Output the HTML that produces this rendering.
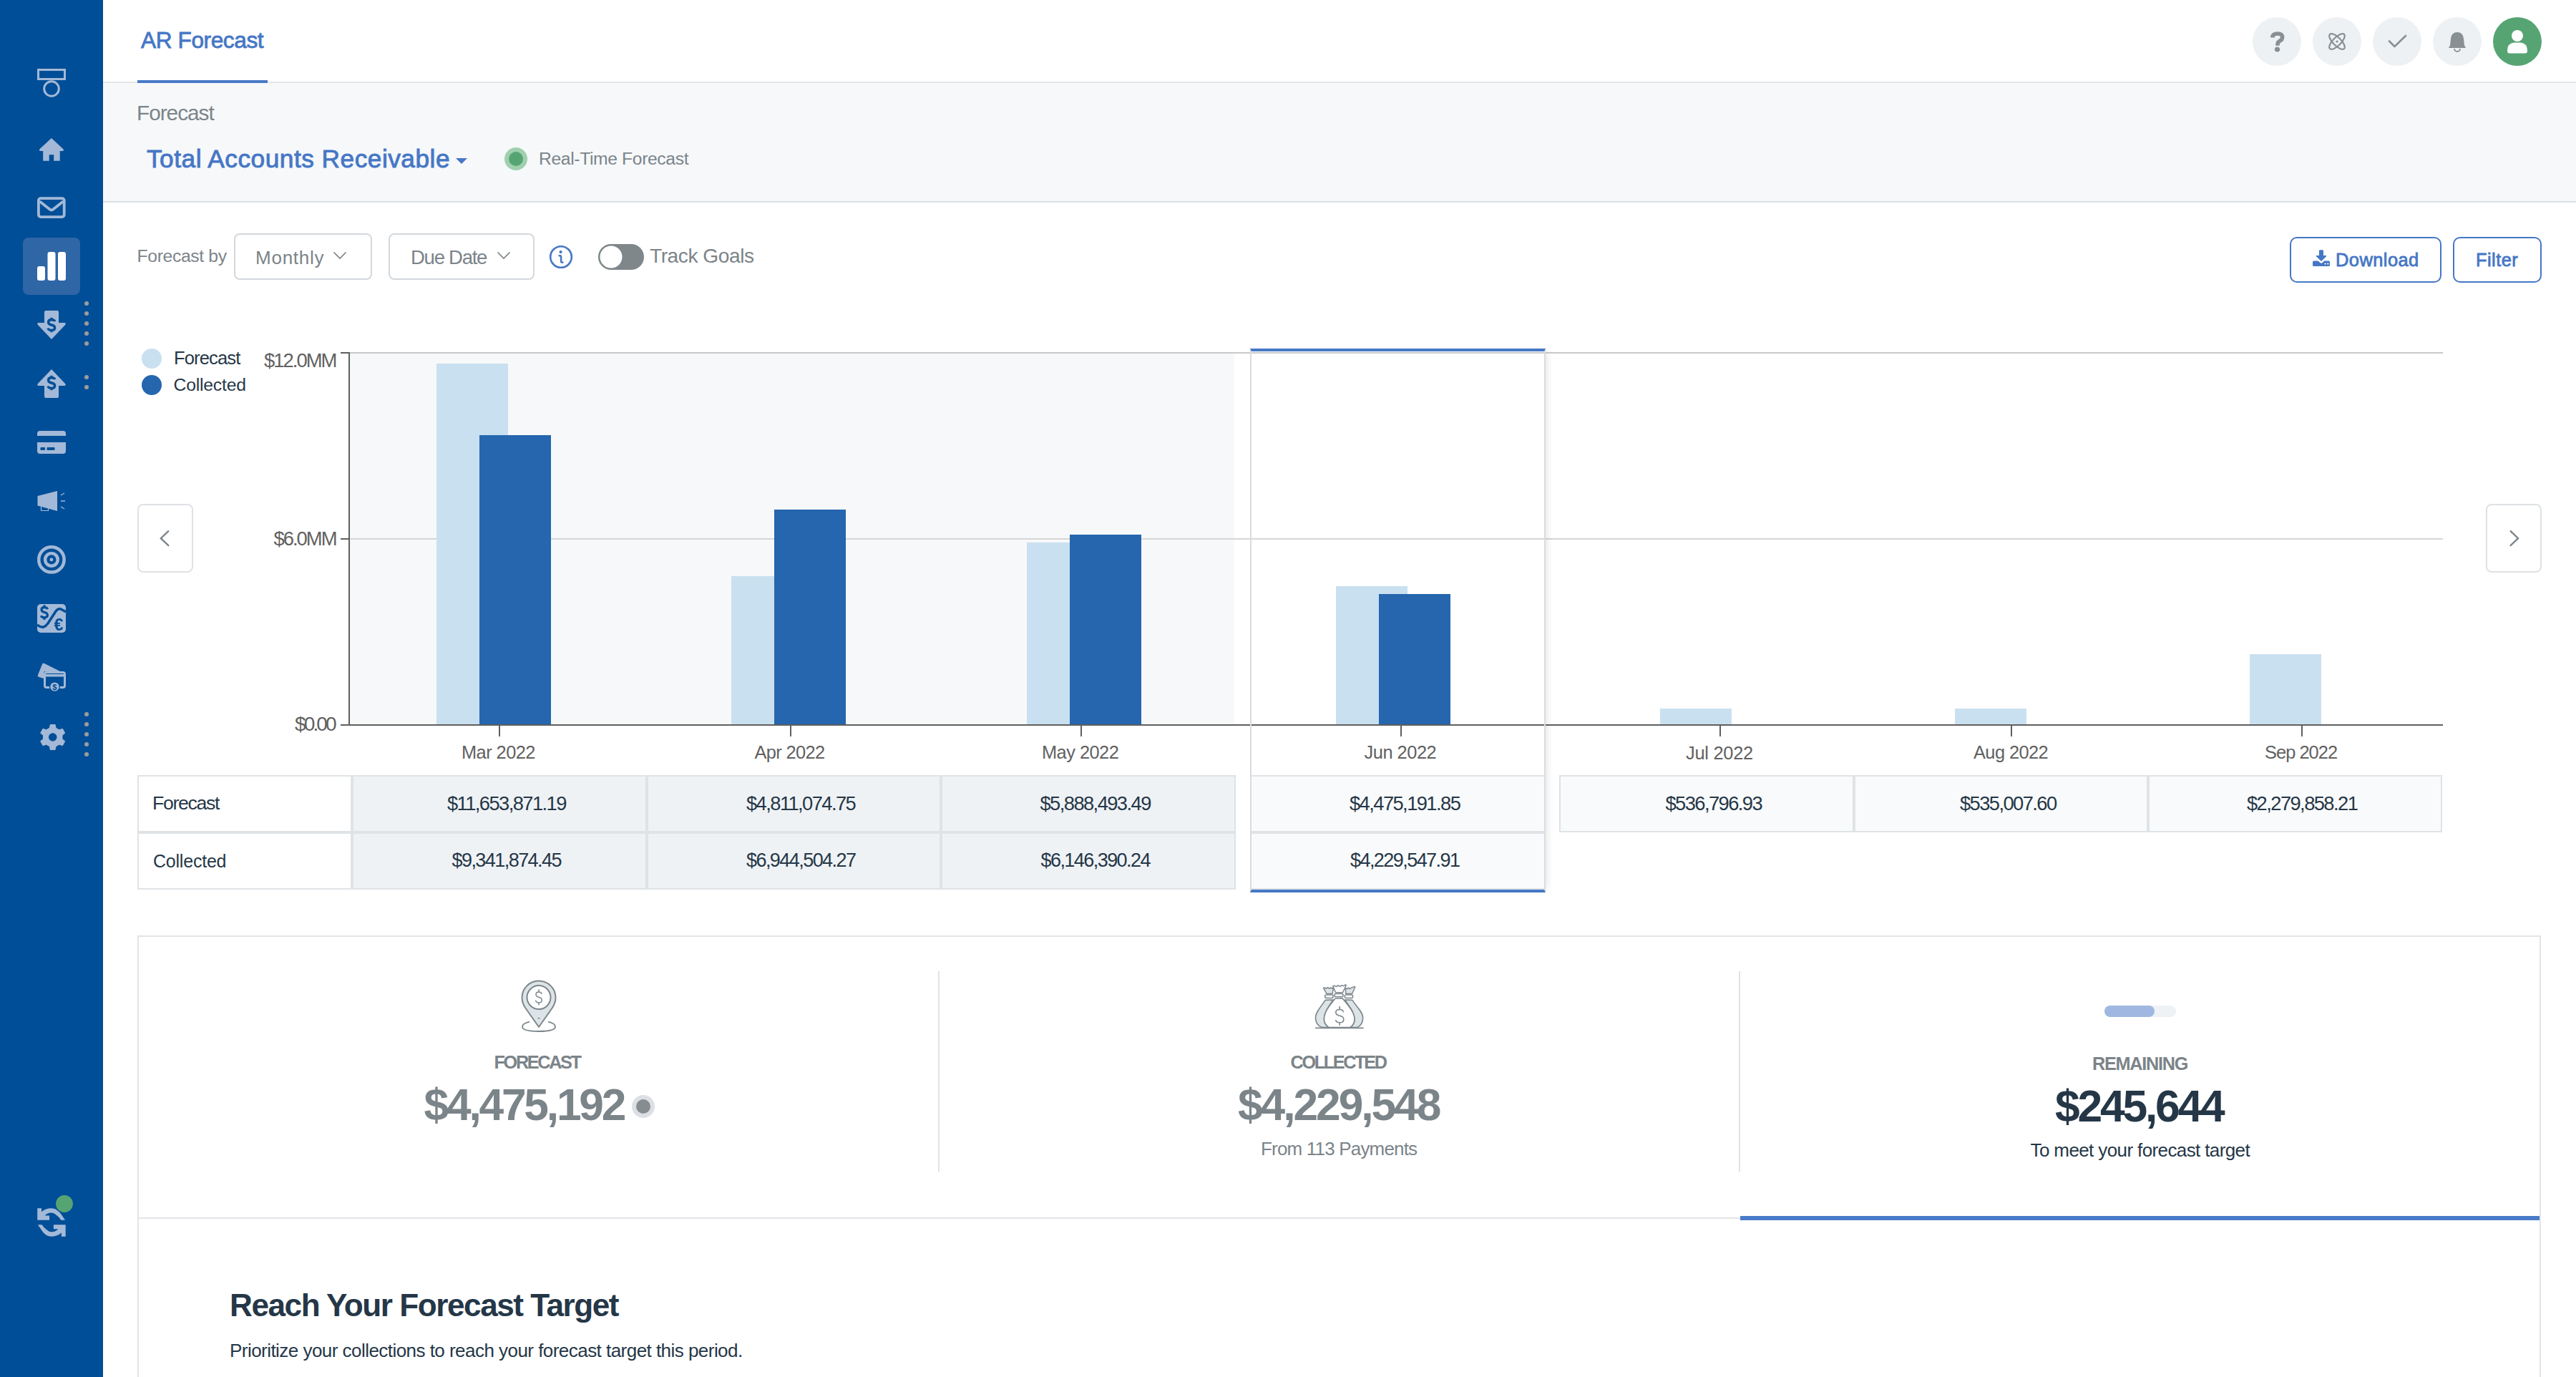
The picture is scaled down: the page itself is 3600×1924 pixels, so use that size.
<!DOCTYPE html><html><head><meta charset="utf-8"><title>AR Forecast</title><style>
html,body{margin:0;padding:0;width:3600px;height:1924px;overflow:hidden;background:#fff}
.a{position:absolute;box-sizing:border-box}
.t{position:absolute;white-space:nowrap;font-family:'Liberation Sans',sans-serif;margin:0}
svg{position:absolute;left:0;top:0;overflow:visible}
</style></head><body>
<div class="a" style="left:0px;top:0px;width:144px;height:1924px;background:#004e97"></div>
<div class="a" style="left:32px;top:332px;width:80px;height:80px;background:#2f66a6;border-radius:8px"></div>
<svg width="144" height="1924"><rect x="53.5" y="97.5" width="37" height="13" fill="none" stroke="#a3b9d7" stroke-width="3"/><circle cx="72" cy="124" r="10.3" fill="none" stroke="#a3b9d7" stroke-width="3"/><path d="M71.9 193 L88.6 208.6 Q89.6 210.6 88 210.9 H83.7 V224.7 H75.2 V216.2 H68.7 V224.7 H60.2 V210.9 H55.8 Q54.2 210.6 55.2 208.6 Z" fill="#a3b9d7"/><rect x="53.9" y="277.1" width="35.8" height="26" rx="3" fill="none" stroke="#a3b9d7" stroke-width="3.8"/><path d="M55.6 281.6 L69.5 292.6 Q71.9 294.4 74.3 292.6 L88.2 281.6" fill="none" stroke="#a3b9d7" stroke-width="3.8"/><rect x="52" y="372" width="11" height="20" rx="3" fill="#fff"/><rect x="66.5" y="352" width="11" height="40" rx="3" fill="#fff"/><rect x="81" y="352" width="11" height="40" rx="3" fill="#fff"/><path d="M64 434 H80 Q82 434 82 436 V451 H90 Q93 451 91 454 L73 473 Q72 474.5 71 473 L53 454 Q51 451 54 451 H62 V436 Q62 434 64 434 Z" fill="#a3b9d7"/><path d="M76.6 449.2 Q76 446.8 72 446.8 Q67.6 446.8 67.6 450.2 Q67.6 453 72 454 Q76.6 455 76.6 458.2 Q76.6 461.4 72 461.4 Q67.8 461.4 67 458.6" transform="translate(0 0)" fill="none" stroke="#004e97" stroke-width="3.4"/><rect x="70.4" y="443.8" width="3.2" height="4" fill="#004e97"/><rect x="70.4" y="460.5" width="3.2" height="3.7" fill="#004e97"/><path d="M64 556 H80 Q82 556 82 554 V539 H90 Q93 539 91 536 L73 517 Q72 515.5 71 517 L53 536 Q51 539 54 539 H62 V554 Q62 556 64 556 Z" fill="#a3b9d7"/><path d="M76.6 449.2 Q76 446.8 72 446.8 Q67.6 446.8 67.6 450.2 Q67.6 453 72 454 Q76.6 455 76.6 458.2 Q76.6 461.4 72 461.4 Q67.8 461.4 67 458.6" transform="translate(0 81)" fill="none" stroke="#004e97" stroke-width="3.4"/><rect x="70.4" y="524.8" width="3.2" height="4" fill="#004e97"/><rect x="70.4" y="541.5" width="3.2" height="3.7" fill="#004e97"/><circle cx="121" cy="424" r="3" fill="#9c9c9c"/><circle cx="121" cy="438" r="3" fill="#9c9c9c"/><circle cx="121" cy="452" r="3" fill="#9c9c9c"/><circle cx="121" cy="466" r="3" fill="#9c9c9c"/><circle cx="121" cy="480" r="3" fill="#9c9c9c"/><circle cx="121" cy="527" r="3" fill="#9c9c9c"/><circle cx="121" cy="541" r="3" fill="#9c9c9c"/><circle cx="121" cy="998" r="3" fill="#9c9c9c"/><circle cx="121" cy="1012" r="3" fill="#9c9c9c"/><circle cx="121" cy="1026" r="3" fill="#9c9c9c"/><circle cx="121" cy="1040" r="3" fill="#9c9c9c"/><circle cx="121" cy="1054" r="3" fill="#9c9c9c"/><path d="M52 609 V606 Q52 602 56 602 H88 Q92 602 92 606 V609 Z" fill="#a3b9d7"/><path d="M52 618 H92 V630 Q92 634 88 634 H56 Q52 634 52 630 Z" fill="#a3b9d7"/><rect x="56.5" y="625" width="6.5" height="4" rx="1" fill="#004e97"/><rect x="65.5" y="625" width="11" height="4" rx="1" fill="#004e97"/><path d="M52.5 693 L80 686 L80 714 L52.5 706.5 Z" fill="#a3b9d7"/><path d="M57.5 708 V713.5 H67.5 V710" fill="none" stroke="#a3b9d7" stroke-width="1.2"/><path d="M85 692 L90 689 M85 700 H91 M85 708 L90 711" stroke="#a3b9d7" stroke-width="1.3"/><circle cx="71.9" cy="781.9" r="17.7" fill="none" stroke="#a3b9d7" stroke-width="4.5"/><circle cx="71.9" cy="781.9" r="8.8" fill="none" stroke="#a3b9d7" stroke-width="4.4"/><circle cx="71.9" cy="781.9" r="2.4" fill="#a3b9d7"/><rect x="52" y="844" width="40" height="40" rx="5" fill="#a3b9d7"/><path d="M52 873 Q57 877 61 876 Q64 875 67 871 L78 854 Q81 850 85 851 Q89 853 92 855" fill="none" stroke="#004e97" stroke-width="3.5"/><path d="M66.4 851.2 Q65.6 848.6 62 848.6 Q58 848.6 58 851.8 Q58 854.5 62 855.5 Q66.4 856.5 66.4 859.6 Q66.4 862.8 62 862.8 Q58.2 862.8 57.4 860.2" fill="none" stroke="#004e97" stroke-width="3.2"/><rect x="60.5" y="845.4" width="3" height="3.6" fill="#004e97"/><rect x="60.5" y="862.4" width="3" height="3.6" fill="#004e97"/><text x="82" y="881" text-anchor="middle" font-family="Liberation Sans" font-weight="700" font-size="23" fill="#004e97">€</text><path d="M53 943 Q52 945 54.5 946 L61 948 V940 Q61 938 63 938 H84 L62 927 Q60 926 59 928 Z" fill="#a3b9d7"/><rect x="62.5" y="939.5" width="28" height="21" rx="2.5" fill="none" stroke="#a3b9d7" stroke-width="3"/><rect x="62" y="942" width="29" height="3.5" fill="#a3b9d7"/><circle cx="76.4" cy="959.6" r="7.5" fill="#004e97"/><circle cx="76.4" cy="959.6" r="6.2" fill="#a3b9d7"/><text x="76.4" y="963.6" text-anchor="middle" font-family="Liberation Sans" font-weight="700" font-size="11" fill="#004e97">$</text><path d="M69.62 1017.45 L70.58 1012.68 L76.82 1012.68 L77.78 1017.45 L82.53 1020.19 L87.14 1018.64 L90.26 1024.04 L86.61 1027.26 L86.61 1032.74 L90.26 1035.96 L87.14 1041.36 L82.53 1039.81 L77.78 1042.55 L76.82 1047.32 L70.58 1047.32 L69.62 1042.55 L64.87 1039.81 L60.26 1041.36 L57.14 1035.96 L60.79 1032.74 L60.79 1027.26 L57.14 1024.04 L60.26 1018.64 L64.87 1020.19 Z" fill="#a3b9d7" stroke="#a3b9d7" stroke-width="1.6" stroke-linejoin="round"/><circle cx="73.7" cy="1030" r="5.8" fill="#004e97"/><path id="rf" d="M52.2 1688.2 L58 1688.2 L58 1693.3 Q64 1688.2 71.5 1688.2 Q80 1688.2 85 1696 Q87.5 1699.6 91 1704.7 L85.3 1704.7 Q82.5 1700.4 79 1698 Q75.5 1694.6 71.5 1694.6 Q66 1694.6 62.7 1698.6 L69 1698.6 L69 1704.7 L52.2 1704.7 Z" fill="#a3b9d7"/><path d="M52.2 1688.2 L58 1688.2 L58 1693.3 Q64 1688.2 71.5 1688.2 Q80 1688.2 85 1696 Q87.5 1699.6 91 1704.7 L85.3 1704.7 Q82.5 1700.4 79 1698 Q75.5 1694.6 71.5 1694.6 Q66 1694.6 62.7 1698.6 L69 1698.6 L69 1704.7 L52.2 1704.7 Z" transform="rotate(180 71.95 1707.95)" fill="#a3b9d7"/><circle cx="90" cy="1682" r="13.6" fill="#004e97"/><circle cx="90" cy="1682" r="11.9" fill="#57a473"/></svg>
<div class="a" style="left:144px;top:114px;width:3456px;height:2px;background:#e5e5e6"></div>
<div class="a" style="left:192px;top:112px;width:182px;height:4px;background:#4a7bc7"></div>
<div class="a" style="left:144px;top:116px;width:3456px;height:165px;background:#f6f8fa"></div>
<div class="a" style="left:144px;top:281px;width:3456px;height:2px;background:#dcdfe3"></div>
<svg width="3600" height="1924" style="pointer-events:none"><circle cx="3182" cy="58" r="34" fill="#eef1f4"/><circle cx="3266" cy="58" r="34" fill="#eef1f4"/><circle cx="3350" cy="58" r="34" fill="#eef1f4"/><circle cx="3434" cy="58" r="34" fill="#eef1f4"/><circle cx="3518" cy="58" r="34" fill="#57a473"/><path d="M3175.6 52.5 Q3176 47 3183 47 Q3189.6 47 3189.6 52 Q3189.6 55.5 3186 57.3 Q3183 59 3183 62 V63.8" fill="none" stroke="#899094" stroke-width="5.6" stroke-linecap="butt"/><circle cx="3182.5" cy="69" r="3.6" fill="#899094"/><ellipse cx="3266" cy="58" rx="14.2" ry="5.6" transform="rotate(45 3266 58)" fill="none" stroke="#899094" stroke-width="2.2"/><ellipse cx="3266" cy="58" rx="14.2" ry="5.6" transform="rotate(-45 3266 58)" fill="none" stroke="#899094" stroke-width="2.2"/><circle cx="3266" cy="58" r="1.6" fill="#899094"/><path d="M3339 57.5 L3346.5 65 L3362 50" fill="none" stroke="#899094" stroke-width="2.6" stroke-linejoin="round" stroke-linecap="round"/><path d="M3434 45 Q3442 45 3443 54 L3444 63 Q3444.5 65 3446 66.5 V67 H3422 V66.5 Q3423.5 65 3424 63 L3425 54 Q3426 45 3434 45 Z" fill="#899094"/><path d="M3430 68 A4 4 0 0 0 3438 68" fill="none" stroke="#899094" stroke-width="1.8"/><circle cx="3518" cy="50" r="8" fill="#fff"/><path d="M3504 71 Q3504 60 3514 59.5 H3522 Q3532 60 3532 71 Q3532 74.5 3529 74.5 H3507 Q3504 74.5 3504 71 Z" fill="#fff"/></svg>
<div class="a" style="left:705px;top:206px;width:32px;height:32px;background:#a0d0ae;border-radius:50%"></div>
<div class="a" style="left:711px;top:212px;width:20px;height:20px;background:#56a473;border-radius:50%"></div>
<div class="a" style="left:327px;top:326px;width:193px;height:65px;border:2px solid #d4d8dc;border-radius:8px;background:#fff"></div>
<div class="a" style="left:543px;top:326px;width:204px;height:65px;border:2px solid #d4d8dc;border-radius:8px;background:#fff"></div>
<div class="a" style="left:3200px;top:331px;width:212px;height:64px;border:2px solid #4677c5;border-radius:10px;background:#fff"></div>
<div class="a" style="left:3428px;top:331px;width:124px;height:64px;border:2px solid #4677c5;border-radius:10px;background:#fff"></div>
<svg width="3600" height="1924"><path d="M637 221 H653 L645 229 Z" fill="#4677c5"/><path d="M466.5 352.5 L475 361 L483.5 352.5" fill="none" stroke="#7b8489" stroke-width="1.7"/><path d="M695.5 352.5 L704 361 L712.5 352.5" fill="none" stroke="#7b8489" stroke-width="1.7"/><circle cx="784" cy="359" r="14.8" fill="none" stroke="#4677c5" stroke-width="2.6"/><circle cx="783.6" cy="352.1" r="2.1" fill="#4677c5"/><path d="M781.6 357.3 Q784.1 356.6 784.1 359 V365.2 Q784.1 367.2 786.4 366.6" fill="none" stroke="#4677c5" stroke-width="2.5" stroke-linecap="round" stroke-linejoin="round"/><rect x="836" y="341" width="64" height="36" rx="18" fill="#7f878b"/><circle cx="854" cy="359" r="16.5" fill="#fff" stroke="#7f878b" stroke-width="2"/><path d="M3242 349.3 H3246 Q3247 349.3 3247 350.3 V357 H3250.6 Q3251.8 357.2 3251 358.2 L3244.6 364.6 Q3244 365.2 3243.4 364.6 L3237 358.2 Q3236.2 357.2 3237.4 357 H3241 V350.3 Q3241 349.3 3242 349.3 Z" fill="#4677c5"/><path d="M3233.5 364.4 H3239.6 L3242.4 367.1 Q3244 368.4 3245.6 367.1 L3248.4 364.4 H3254.5 Q3256 364.4 3256 366 V370.4 Q3256 371.9 3254.5 371.9 H3233.5 Q3232 371.9 3232 370.4 V366 Q3232 364.4 3233.5 364.4 Z" fill="#4677c5"/><circle cx="3249.6" cy="368.6" r="1.1" fill="#fff"/><circle cx="3253.3" cy="368.6" r="1.1" fill="#fff"/><circle cx="212" cy="501" r="14" fill="#c9e0f0"/><circle cx="212" cy="538" r="14" fill="#2566ae"/></svg>
<div class="a" style="left:489px;top:494px;width:1236px;height:518px;background:#f7f8fa"></div>
<div class="a" style="left:489px;top:492px;width:2925px;height:2px;background:#c9c9c9"></div>
<div class="a" style="left:489px;top:752px;width:2925px;height:2px;background:#d6d6d6"></div>
<div class="a" style="left:610px;top:508px;width:100px;height:505px;background:#c9e0f0"></div>
<div class="a" style="left:1022px;top:805px;width:100px;height:208px;background:#c9e0f0"></div>
<div class="a" style="left:1435px;top:758px;width:100px;height:255px;background:#c9e0f0"></div>
<div class="a" style="left:1867px;top:819px;width:100px;height:194px;background:#c9e0f0"></div>
<div class="a" style="left:2320px;top:990px;width:100px;height:23px;background:#c9e0f0"></div>
<div class="a" style="left:2732px;top:990px;width:100px;height:23px;background:#c9e0f0"></div>
<div class="a" style="left:3144px;top:914px;width:100px;height:99px;background:#c9e0f0"></div>
<div class="a" style="left:670px;top:608px;width:100px;height:405px;background:#2566ae"></div>
<div class="a" style="left:1082px;top:712px;width:100px;height:301px;background:#2566ae"></div>
<div class="a" style="left:1495px;top:747px;width:100px;height:266px;background:#2566ae"></div>
<div class="a" style="left:1927px;top:830px;width:100px;height:183px;background:#2566ae"></div>
<div class="a" style="left:487px;top:492px;width:2px;height:522px;background:#5f5f5f"></div>
<div class="a" style="left:476px;top:1012px;width:2938px;height:2px;background:#5f5f5f"></div>
<div class="a" style="left:476px;top:492px;width:12px;height:2px;background:#5f5f5f"></div>
<div class="a" style="left:476px;top:752px;width:12px;height:2px;background:#5f5f5f"></div>
<div class="a" style="left:697px;top:1014px;width:2px;height:15px;background:#5f5f5f"></div>
<div class="a" style="left:1104px;top:1014px;width:2px;height:15px;background:#5f5f5f"></div>
<div class="a" style="left:1510px;top:1014px;width:2px;height:15px;background:#5f5f5f"></div>
<div class="a" style="left:1957px;top:1014px;width:2px;height:15px;background:#5f5f5f"></div>
<div class="a" style="left:2403px;top:1014px;width:2px;height:15px;background:#5f5f5f"></div>
<div class="a" style="left:2810px;top:1014px;width:2px;height:15px;background:#5f5f5f"></div>
<div class="a" style="left:3216px;top:1014px;width:2px;height:15px;background:#5f5f5f"></div>
<div class="a" style="left:1747px;top:487px;width:413px;height:760px;border-left:2px solid #d8dce1;border-right:2px solid #d8dce1;border-top:4px solid #4677c5;border-bottom:4px solid #4677c5;box-shadow:6px 0 10px -4px rgba(0,0,0,0.10)"></div>
<div class="a" style="left:192px;top:704px;width:78px;height:96px;border:2px solid #dfe2e5;border-radius:8px;background:#fff"></div>
<div class="a" style="left:3474px;top:704px;width:78px;height:96px;border:2px solid #dfe2e5;border-radius:8px;background:#fff"></div>
<svg width="3600" height="1924"><path d="M235.3 742.2 L224.8 752.2 L235.3 762.2" fill="none" stroke="#7b8489" stroke-width="2.3" stroke-linecap="round"/><path d="M3508.6 742.2 L3519.1 752.2 L3508.6 762.2" fill="none" stroke="#7b8489" stroke-width="2.3" stroke-linecap="round"/></svg>
<div class="a" style="left:192px;top:1083px;width:300px;height:80px;border:2px solid #dfe3e6;background:#fff"></div>
<div class="a" style="left:192px;top:1163px;width:300px;height:80px;border:2px solid #dfe3e6;background:#fff"></div>
<div class="a" style="left:492px;top:1083px;width:412px;height:80px;border:2px solid #dfe3e6;background:#eff2f5"></div>
<div class="a" style="left:492px;top:1163px;width:412px;height:80px;border:2px solid #dfe3e6;background:#eff2f5"></div>
<div class="a" style="left:904px;top:1083px;width:411px;height:80px;border:2px solid #dfe3e6;background:#eff2f5"></div>
<div class="a" style="left:904px;top:1163px;width:411px;height:80px;border:2px solid #dfe3e6;background:#eff2f5"></div>
<div class="a" style="left:1315px;top:1083px;width:412px;height:80px;border:2px solid #dfe3e6;background:#eff2f5"></div>
<div class="a" style="left:1315px;top:1163px;width:412px;height:80px;border:2px solid #dfe3e6;background:#eff2f5"></div>
<div class="a" style="left:1749px;top:1083px;width:409px;height:80px;border-top:2px solid #dfe3e6;border-bottom:2px solid #dfe3e6;background:#f9fafb"></div>
<div class="a" style="left:1749px;top:1163px;width:409px;height:80px;border-top:2px solid #dfe3e6;border-bottom:2px solid #dfe3e6;background:#f9fafb"></div>
<div class="a" style="left:2179px;top:1083px;width:412px;height:80px;border:2px solid #dfe3e6;background:#f9fafb"></div>
<div class="a" style="left:2591px;top:1083px;width:411px;height:80px;border:2px solid #dfe3e6;background:#f9fafb"></div>
<div class="a" style="left:3002px;top:1083px;width:411px;height:80px;border:2px solid #dfe3e6;background:#f9fafb"></div>
<div class="a" style="left:192px;top:1307px;width:3359px;height:700px;border:2px solid #e1e4e8;background:#fff"></div>
<div class="a" style="left:1311px;top:1357px;width:2px;height:280px;background:#dfe3e6"></div>
<div class="a" style="left:2430px;top:1357px;width:2px;height:280px;background:#dfe3e6"></div>
<div class="a" style="left:194px;top:1701px;width:3355px;height:2px;background:#e1e4e8"></div>
<div class="a" style="left:2432px;top:1699px;width:1117px;height:6px;background:#4a7bc8"></div>
<div class="a" style="left:2941px;top:1405px;width:100px;height:16px;background:#eef2f5;border-radius:8px"></div>
<div class="a" style="left:2941px;top:1405px;width:70px;height:16px;background:#a0b8e1;border-radius:8px"></div>
<div class="a" style="left:883px;top:1530px;width:32px;height:32px;background:#dcdfe3;border-radius:50%"></div>
<div class="a" style="left:889px;top:1536px;width:20px;height:20px;background:#858d91;border-radius:50%"></div>
<svg width="3600" height="1924"><path d="M753 1435 L734 1408 Q729.5 1401 729.5 1394 A23.5 23.5 0 0 1 776.5 1394 Q776.5 1401 772 1408 Z" fill="#dde4e7" stroke="#7d868b" stroke-width="2" stroke-linejoin="round"/><circle cx="753" cy="1393.6" r="16.5" fill="#fff" stroke="#7d868b" stroke-width="2"/><path d="M757.2 1388.8 Q756.2 1386 753 1386 Q749 1386 749 1389.6 Q749 1392.3 753 1393.2 Q757.2 1394.2 757.2 1397.4 Q757.2 1401 753 1401 Q749.3 1401 748.5 1397.6 M753 1382.2 V1386 M753 1401 V1404.2" fill="none" stroke="#7d868b" stroke-width="1.5"/><path d="M740 1427.6 Q730 1430 730 1434.5 Q730 1441 753 1441 Q776 1441 776 1434.5 Q776 1430 766 1427.6" fill="none" stroke="#7d868b" stroke-width="1.8"/><path d="M751.5 1422.7 H754.5" stroke="#7d868b" stroke-width="1.5"/><path d="M1852.1 1397.4 C1846 1407 1838.5 1414 1838.5 1422 C1838.5 1429 1842 1433.5 1847.5 1435.6 L1857.4 1435.6 C1854 1433.5 1850.4 1430 1850.4 1424 C1850.4 1414 1858 1405 1863 1397 Z" fill="#dde4e7" stroke="#7d868b" stroke-width="1.6" stroke-linejoin="round"/><path d="M1889.9 1397.4 C1896 1407 1904.7 1414 1904.7 1422 C1904.7 1429 1901 1433.5 1896.6 1435.6 L1886.7 1435.6 C1890 1433.5 1893 1430 1893 1424 C1893 1414 1884.5 1405 1879.5 1397 Z" fill="#dde4e7" stroke="#7d868b" stroke-width="1.6" stroke-linejoin="round"/><path d="M1865.8 1395.3 C1858 1405 1850.4 1414 1850.4 1424 C1850.4 1430 1854 1433.5 1857.4 1435.6 L1886.7 1435.6 C1890 1433.5 1893 1430 1893 1424 C1893 1414 1884 1405 1876 1394.8 Z" fill="#fff" stroke="#7d868b" stroke-width="1.6" stroke-linejoin="round"/><path d="M1853.9 1388.5 L1849.8 1380.8 Q1849.6 1379.7 1850.8 1380 L1853.5 1381.2 L1855.5 1379.6 L1857.5 1381.3 L1859.5 1380 L1861.5 1381 L1863.4 1379.8 L1862.2 1388.5 Z" fill="#dde4e7" stroke="#7d868b" stroke-width="1.5" stroke-linejoin="round"/><path d="M1880.9 1388.5 L1880.2 1380.8 L1882.4 1381.8 L1884.5 1380.2 L1886.5 1381.7 L1888.8 1380 L1892.9 1378.6 Q1894 1378.8 1893.5 1379.8 L1889.6 1388.5 Z" fill="#dde4e7" stroke="#7d868b" stroke-width="1.5" stroke-linejoin="round"/><path d="M1866.5 1386.8 L1862.8 1377.8 L1865 1377.3 L1867.5 1378.6 L1870 1376.8 L1872.5 1378.4 L1875 1376.8 L1877.5 1377.6 L1880.4 1376 Q1881.6 1376.3 1881 1377.3 L1876.6 1386.8 Z" fill="#fff" stroke="#7d868b" stroke-width="1.5" stroke-linejoin="round"/><rect x="1851.6" y="1390.1" width="11.6" height="4.4" rx="2.2" fill="#fff" stroke="#7d868b" stroke-width="1.5"/><rect x="1864.9" y="1388.4" width="12.2" height="4.3" rx="2.1" fill="#fff" stroke="#7d868b" stroke-width="1.5"/><rect x="1879.2" y="1390.1" width="11.6" height="4.4" rx="2.2" fill="#fff" stroke="#7d868b" stroke-width="1.5"/><path d="M1877.6 1414.2 Q1876.5 1410.5 1872.2 1410.5 Q1866.8 1410.5 1866.8 1414.6 Q1866.8 1418.2 1872.2 1419.3 Q1877.8 1420.4 1877.8 1424.4 Q1877.8 1428.8 1872.2 1428.8 Q1867.6 1428.8 1866.5 1425" fill="none" stroke="#7d868b" stroke-width="1.6"/><path d="M1872.2 1406 V1410.5 M1872.2 1428.8 V1432.8" stroke="#7d868b" stroke-width="1.6"/><path d="M1838 1436.3 H1905.6" stroke="#7d868b" stroke-width="1.8"/></svg>
<div class="t" id="tab" style="left:197.0px;top:40.5px;font-size:31.55px;line-height:31.55px;letter-spacing:-0.369px;font-weight:400;color:#4677c5;-webkit-text-stroke:0.8px #4677c5">AR Forecast</div>
<div class="t" id="fcl" style="left:191.0px;top:142.5px;font-size:29.71px;line-height:29.71px;letter-spacing:-0.986px;font-weight:400;color:#7b8489">Forecast</div>
<div class="t" id="tar" style="left:205.0px;top:204.0px;font-size:35.23px;line-height:35.23px;letter-spacing:0.516px;font-weight:400;color:#4677c5;-webkit-text-stroke:0.9px #4677c5">Total Accounts Receivable</div>
<div class="t" id="rtf" style="left:753.0px;top:210.0px;font-size:24.66px;line-height:24.66px;letter-spacing:-0.355px;font-weight:400;color:#7b8489">Real-Time Forecast</div>
<div class="t" id="fby" style="left:191.5px;top:346.0px;font-size:24.66px;line-height:24.66px;letter-spacing:-0.324px;font-weight:400;color:#7b8489">Forecast by</div>
<div class="t" id="mon" style="left:357.0px;top:347.0px;font-size:26.03px;line-height:26.03px;letter-spacing:0.748px;font-weight:400;color:#7b8489">Monthly</div>
<div class="t" id="due" style="left:574.0px;top:346.0px;font-size:27.54px;line-height:27.54px;letter-spacing:-1.272px;font-weight:400;color:#7b8489">Due Date</div>
<div class="t" id="trk" style="left:908.0px;top:344.0px;font-size:28.12px;line-height:28.12px;letter-spacing:-0.447px;font-weight:400;color:#7b8489">Track Goals</div>
<div class="t" id="dl" style="left:3264.0px;top:351.2px;font-size:25.47px;line-height:25.47px;letter-spacing:0.429px;font-weight:400;color:#4677c5;-webkit-text-stroke:0.8px #4677c5">Download</div>
<div class="t" id="flt" style="left:3460.0px;top:351.2px;font-size:25.47px;line-height:25.47px;letter-spacing:0.432px;font-weight:400;color:#4677c5;-webkit-text-stroke:0.8px #4677c5">Filter</div>
<div class="t" id="lgf" style="left:243.0px;top:488.3px;font-size:25.51px;line-height:25.51px;letter-spacing:-0.848px;font-weight:400;color:#253747">Forecast</div>
<div class="t" id="lgc" style="left:242.5px;top:526.0px;font-size:24.66px;line-height:24.66px;letter-spacing:-0.172px;font-weight:400;color:#253747">Collected</div>
<div class="t" id="y12" style="left:369.0px;top:489.5px;font-size:27.43px;line-height:27.43px;letter-spacing:-1.988px;font-weight:400;color:#616161">$12.0MM</div>
<div class="t" id="y6" style="left:382.5px;top:738.5px;font-size:27.43px;line-height:27.43px;letter-spacing:-2.012px;font-weight:400;color:#616161">$6.0MM</div>
<div class="t" id="y0" style="left:412.0px;top:998.4px;font-size:28.11px;line-height:28.11px;letter-spacing:-2.911px;font-weight:400;color:#616161">$0.00</div>
<div class="t" id="tbf" style="left:213.0px;top:1109.4px;font-size:26.67px;line-height:26.67px;letter-spacing:-1.333px;font-weight:400;color:#253747">Forecast</div>
<div class="t" id="tbc" style="left:214.0px;top:1190.6px;font-size:24.93px;line-height:24.93px;letter-spacing:-0.182px;font-weight:400;color:#253747">Collected</div>
<div class="t" id="s_fl" style="left:690.5px;top:1472.3px;font-size:25.29px;line-height:25.29px;letter-spacing:-2.364px;font-weight:700;color:#7b8489">FORECAST</div>
<div class="t" id="s_fv" style="left:592.5px;top:1513.3px;font-size:62.27px;line-height:62.27px;letter-spacing:-3.191px;font-weight:700;color:#7b8489">$4,475,192</div>
<div class="t" id="s_cl" style="left:1803.5px;top:1472.3px;font-size:25.29px;line-height:25.29px;letter-spacing:-2.37px;font-weight:700;color:#7b8489">COLLECTED</div>
<div class="t" id="s_cv" style="left:1730.0px;top:1513.3px;font-size:62.27px;line-height:62.27px;letter-spacing:-3.038px;font-weight:700;color:#7b8489">$4,229,548</div>
<div class="t" id="s_cs" style="left:1762.0px;top:1591.6px;font-size:26.0px;line-height:26.0px;letter-spacing:-0.815px;font-weight:400;color:#7b8489">From 113 Payments</div>
<div class="t" id="s_rl" style="left:2924.0px;top:1473.7px;font-size:25.29px;line-height:25.29px;letter-spacing:-1.293px;font-weight:700;color:#7b8489">REMAINING</div>
<div class="t" id="s_rv" style="left:2872.0px;top:1514.8px;font-size:62.4px;line-height:62.4px;letter-spacing:-3.226px;font-weight:700;color:#253747">$245,644</div>
<div class="t" id="s_rs" style="left:2837.5px;top:1594.0px;font-size:26.03px;line-height:26.03px;letter-spacing:-0.62px;font-weight:400;color:#253747">To meet your forecast target</div>
<div class="t" id="reach" style="left:321.0px;top:1801.5px;font-size:44.11px;line-height:44.11px;letter-spacing:-1.456px;font-weight:700;color:#253747">Reach Your Forecast Target</div>
<div class="t" id="prio" style="left:321.0px;top:1873.6px;font-size:26.03px;line-height:26.03px;letter-spacing:-0.545px;font-weight:400;color:#253747">Prioritize your collections to reach your forecast target this period.</div>
<div class="t" id="m0" style="left:645.0px;top:1038.6px;font-size:25.4px;line-height:25.4px;letter-spacing:-0.555px;font-weight:400;color:#616161">Mar 2022</div>
<div class="t" id="m1" style="left:1054.5px;top:1038.6px;font-size:25.4px;line-height:25.4px;letter-spacing:-0.641px;font-weight:400;color:#616161">Apr 2022</div>
<div class="t" id="m2" style="left:1456.0px;top:1038.6px;font-size:25.4px;line-height:25.4px;letter-spacing:-0.527px;font-weight:400;color:#616161">May 2022</div>
<div class="t" id="m3" style="left:1906.5px;top:1038.6px;font-size:25.4px;line-height:25.4px;letter-spacing:-0.468px;font-weight:400;color:#616161">Jun 2022</div>
<div class="t" id="m4" style="left:2356.0px;top:1039.6px;font-size:25.4px;line-height:25.4px;letter-spacing:-0.269px;font-weight:400;color:#616161">Jul 2022</div>
<div class="t" id="m5" style="left:2758.0px;top:1038.6px;font-size:25.4px;line-height:25.4px;letter-spacing:-0.584px;font-weight:400;color:#616161">Aug 2022</div>
<div class="t" id="m6" style="left:3165.0px;top:1038.6px;font-size:25.4px;line-height:25.4px;letter-spacing:-0.955px;font-weight:400;color:#616161">Sep 2022</div>
<div class="t" id="vf0" style="left:625.0px;top:1108.7px;font-size:27.3px;line-height:27.3px;letter-spacing:-1.563px;font-weight:400;color:#253747">$11,653,871.19</div>
<div class="t" id="vf1" style="left:1043.0px;top:1108.7px;font-size:27.3px;line-height:27.3px;letter-spacing:-1.563px;font-weight:400;color:#253747">$4,811,074.75</div>
<div class="t" id="vf2" style="left:1453.5px;top:1108.7px;font-size:27.3px;line-height:27.3px;letter-spacing:-1.563px;font-weight:400;color:#253747">$5,888,493.49</div>
<div class="t" id="vf3" style="left:1886.0px;top:1108.7px;font-size:27.3px;line-height:27.3px;letter-spacing:-1.563px;font-weight:400;color:#253747">$4,475,191.85</div>
<div class="t" id="vf4" style="left:2327.5px;top:1108.7px;font-size:27.3px;line-height:27.3px;letter-spacing:-1.563px;font-weight:400;color:#253747">$536,796.93</div>
<div class="t" id="vf5" style="left:2739.0px;top:1108.7px;font-size:27.3px;line-height:27.3px;letter-spacing:-1.563px;font-weight:400;color:#253747">$535,007.60</div>
<div class="t" id="vf6" style="left:3140.0px;top:1108.7px;font-size:27.3px;line-height:27.3px;letter-spacing:-1.563px;font-weight:400;color:#253747">$2,279,858.21</div>
<div class="t" id="vc0" style="left:631.5px;top:1189.0px;font-size:27.03px;line-height:27.03px;letter-spacing:-1.563px;font-weight:400;color:#253747">$9,341,874.45</div>
<div class="t" id="vc1" style="left:1043.0px;top:1189.0px;font-size:27.03px;line-height:27.03px;letter-spacing:-1.563px;font-weight:400;color:#253747">$6,944,504.27</div>
<div class="t" id="vc2" style="left:1454.5px;top:1189.0px;font-size:27.03px;line-height:27.03px;letter-spacing:-1.563px;font-weight:400;color:#253747">$6,146,390.24</div>
<div class="t" id="vc3" style="left:1887.0px;top:1189.0px;font-size:27.03px;line-height:27.03px;letter-spacing:-1.563px;font-weight:400;color:#253747">$4,229,547.91</div>
<script>(function(){var w=window.innerWidth;if(w&&Math.abs(w-3600)>2){document.documentElement.style.zoom=(w/3600);}})();</script>
</body></html>
